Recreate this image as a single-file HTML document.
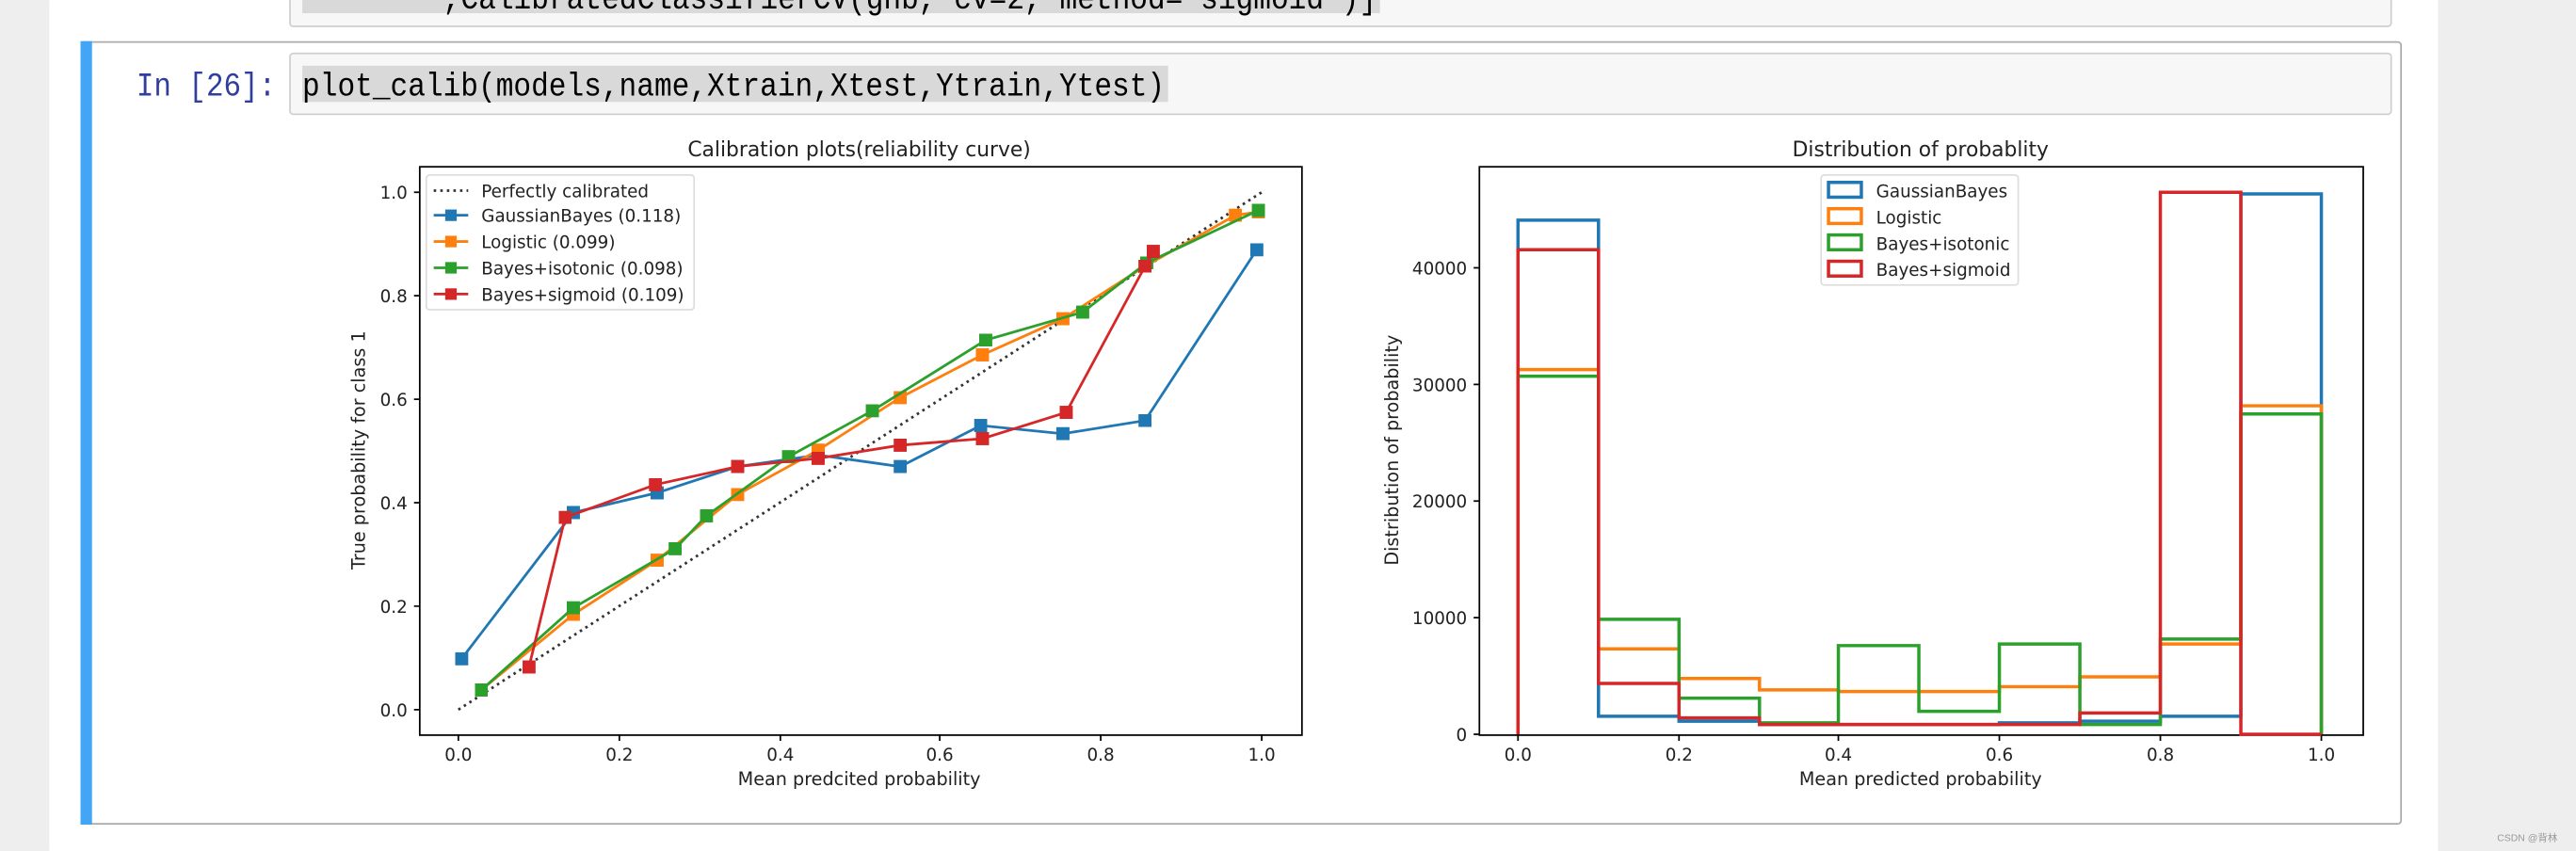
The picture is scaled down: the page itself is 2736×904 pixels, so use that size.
<!DOCTYPE html>
<html><head><meta charset="utf-8"><style>
html,body{margin:0;padding:0;background:#eeeeee;width:2736px;height:904px;overflow:hidden}
svg{display:block}
.t{font-family:"DejaVu Sans","Liberation Sans",sans-serif;fill:#222}
.m{font-family:"Liberation Mono","DejaVu Sans Mono",monospace}
</style></head><body>
<svg width="2736" height="904" viewBox="0 0 1568 518" xmlns="http://www.w3.org/2000/svg">
<defs>
<marker id="mb" markerUnits="userSpaceOnUse" markerWidth="8" markerHeight="8" refX="4" refY="4"><rect width="8" height="8" fill="#1f77b4"/></marker>
<marker id="mo" markerUnits="userSpaceOnUse" markerWidth="8" markerHeight="8" refX="4" refY="4"><rect width="8" height="8" fill="#ff7f0e"/></marker>
<marker id="mg" markerUnits="userSpaceOnUse" markerWidth="8" markerHeight="8" refX="4" refY="4"><rect width="8" height="8" fill="#2ca02c"/></marker>
<marker id="mr" markerUnits="userSpaceOnUse" markerWidth="8" markerHeight="8" refX="4" refY="4"><rect width="8" height="8" fill="#d62728"/></marker>
</defs>
<rect x="0" y="0" width="1568" height="518" fill="#eeeeee"/>
<rect x="30" y="0" width="1454" height="518" fill="#ffffff"/>
<!-- previous cell -->
<rect x="176.5" y="-5" width="1279" height="21" rx="2" fill="#f7f7f7" stroke="#cfcfcf"/>
<rect x="184" y="-5" width="656" height="13" fill="#d9d9d9"/>
<text x="184" y="5" class="m" font-size="20" fill="#000" xml:space="preserve" textLength="654" lengthAdjust="spacingAndGlyphs">        ,CalibratedClassifierCV(gnb, cv=2, method='sigmoid')]</text>
<!-- current cell -->
<rect x="49.5" y="25.5" width="1412" height="476" rx="2" fill="#fff" stroke="#ababab"/>
<rect x="49" y="25" width="7" height="477" fill="#42a5f5"/>
<rect x="176.5" y="32.5" width="1279" height="37" rx="2" fill="#f7f7f7" stroke="#cfcfcf"/>
<rect x="184" y="40" width="527" height="22" fill="#d9d9d9"/>
<text x="83" y="58" class="m" font-size="20" fill="#303F9F" textLength="85" lengthAdjust="spacingAndGlyphs">In [26]:</text>
<text x="184" y="58" class="m" font-size="20" fill="#000" textLength="525" lengthAdjust="spacingAndGlyphs">plot_calib(models,name,Xtrain,Xtest,Ytrain,Ytest)</text>

<!-- plot 1 -->
<text x="523" y="95" class="t" font-size="12.5" text-anchor="middle">Calibration plots(reliability curve)</text>
<rect x="255.5" y="101.5" width="537" height="346" fill="#fff" stroke="#000" stroke-width="1"/>
<g class="t" font-size="10.5" text-anchor="end">
<text x="248" y="436">0.0</text><text x="248" y="373">0.2</text><text x="248" y="310">0.4</text><text x="248" y="247">0.6</text><text x="248" y="184">0.8</text><text x="248" y="121">1.0</text>
</g>
<g stroke="#000"><path d="M252 432H255M252 369H255M252 306H255M252 243H255M252 180H255M252 117H255"/>
<path d="M279 447V451M377 447V451M475 447V451M572 447V451M670 447V451M768 447V451"/></g>
<g class="t" font-size="10.5" text-anchor="middle">
<text x="279" y="463">0.0</text><text x="377" y="463">0.2</text><text x="475" y="463">0.4</text><text x="572" y="463">0.6</text><text x="670" y="463">0.8</text><text x="768" y="463">1.0</text>
</g>
<text x="523" y="478" class="t" font-size="11" text-anchor="middle">Mean predcited probability</text>
<text transform="translate(222,274) rotate(-90)" class="t" font-size="11" text-anchor="middle">True probability for class 1</text>
<path d="M279 432L768 117" stroke="#333" stroke-width="1.6" stroke-dasharray="1.5 2.5" fill="none"/>
<g fill="none" stroke-width="1.6">
<polyline stroke="#1f77b4" marker-start="url(#mb)" marker-mid="url(#mb)" marker-end="url(#mb)" points="281,401 349,312 400,300 449,284 498,277 548,284 597,259 647,264 697,256 765,152"/>
<polyline stroke="#ff7f0e" marker-start="url(#mo)" marker-mid="url(#mo)" marker-end="url(#mo)" points="293,420 349,374 400,341 449,301 498,274 548,242 598,216 647,194 697,162 752,131 766,129"/>
<polyline stroke="#2ca02c" marker-start="url(#mg)" marker-mid="url(#mg)" marker-end="url(#mg)" points="293,420 349,370 411,334 430,314 480,278 531,250 600,207 659,190 698,160 766,128"/>
<polyline stroke="#d62728" marker-start="url(#mr)" marker-mid="url(#mr)" marker-end="url(#mr)" points="322,406 344,315 399,295 449,284 498,279 548,271 598,267 649,251 697,162 702,153"/>
</g>
<rect x="259.5" y="106.5" width="163" height="82" rx="2" fill="#fff" fill-opacity="0.85" stroke="#ddd"/>
<path d="M264 116H285" stroke="#333" stroke-width="1.6" stroke-dasharray="1.5 2.5"/>
<g stroke-width="1.6">
<path d="M264 131H285" stroke="#1f77b4"/><rect x="271" y="127.5" width="7" height="7" fill="#1f77b4"/>
<path d="M264 147H285" stroke="#ff7f0e"/><rect x="271" y="143.5" width="7" height="7" fill="#ff7f0e"/>
<path d="M264 163H285" stroke="#2ca02c"/><rect x="271" y="159.5" width="7" height="7" fill="#2ca02c"/>
<path d="M264 179H285" stroke="#d62728"/><rect x="271" y="175.5" width="7" height="7" fill="#d62728"/>
</g>
<g class="t" font-size="10.5">
<text x="293" y="120">Perfectly calibrated</text>
<text x="293" y="135">GaussianBayes (0.118)</text>
<text x="293" y="151">Logistic (0.099)</text>
<text x="293" y="167">Bayes+isotonic (0.098)</text>
<text x="293" y="183">Bayes+sigmoid (0.109)</text>
</g>

<!-- plot 2 -->
<text x="1169" y="95" class="t" font-size="12.5" text-anchor="middle">Distribution of probablity</text>
<rect x="900.5" y="101.5" width="538" height="346" fill="#fff" stroke="#000" stroke-width="1"/>
<g class="t" font-size="10.5" text-anchor="end">
<text x="893" y="451">0</text><text x="893" y="380">10000</text><text x="893" y="309">20000</text><text x="893" y="238">30000</text><text x="893" y="167">40000</text>
</g>
<g stroke="#000"><path d="M897 447H900M897 376H900M897 305H900M897 234H900M897 163H900"/>
<path d="M924 447V451M1022 447V451M1119 447V451M1217 447V451M1315 447V451M1413 447V451"/></g>
<g class="t" font-size="10.5" text-anchor="middle">
<text x="924" y="463">0.0</text><text x="1022" y="463">0.2</text><text x="1119" y="463">0.4</text><text x="1217" y="463">0.6</text><text x="1315" y="463">0.8</text><text x="1413" y="463">1.0</text>
</g>
<text x="1169" y="478" class="t" font-size="11" text-anchor="middle">Mean predicted probability</text>
<text transform="translate(851,274) rotate(-90)" class="t" font-size="11" text-anchor="middle">Distribution of probability</text>
<g fill="none" stroke-width="2">
<path stroke="#1f77b4" d="M924 447V134H973V436H1022V439H1071V441H1119V441H1168V441H1217V440H1266V439H1315V436H1364V118H1413V447"/>
<path stroke="#ff7f0e" d="M924 447V225H973V395H1022V413H1071V420H1119V421H1168V421H1217V418H1266V412H1315V392H1364V247H1413V447"/>
<path stroke="#2ca02c" d="M924 447V229H973V377H1022V425H1071V440H1119V393H1168V433H1217V392H1266V441H1315V389H1364V252H1413V447"/>
<path stroke="#d62728" d="M924 447V152H973V416H1022V437H1071V441H1119V441H1168V441H1217V441H1266V434H1315V117H1364V447H1413"/>
</g>
<rect x="1108.5" y="106.5" width="120" height="67" rx="2" fill="#fff" fill-opacity="0.85" stroke="#ddd"/>
<g fill="none" stroke-width="2">
<rect x="1113" y="111" width="20" height="9" stroke="#1f77b4"/>
<rect x="1113" y="127" width="20" height="9" stroke="#ff7f0e"/>
<rect x="1113" y="143" width="20" height="9" stroke="#2ca02c"/>
<rect x="1113" y="159" width="20" height="9" stroke="#d62728"/>
</g>
<g class="t" font-size="10.5">
<text x="1142" y="120">GaussianBayes</text>
<text x="1142" y="136">Logistic</text>
<text x="1142" y="152">Bayes+isotonic</text>
<text x="1142" y="168">Bayes+sigmoid</text>
</g>
<text x="1520" y="512" font-family="'Liberation Sans','Noto Sans CJK SC',sans-serif" font-size="6" fill="#999">CSDN @背林</text>
</svg>
</body></html>
